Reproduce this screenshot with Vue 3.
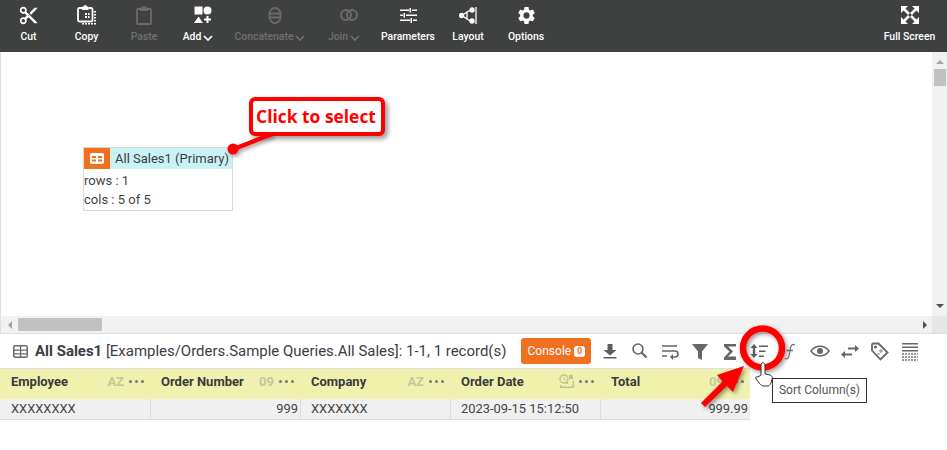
<template>
  <div class="page">
    <div class="toolbar">
      <div
        v-for="item in tools"
        :key="item.label"
        :class="['tool', { off: item.off, caret: item.caret }]"
        :style="{ width: item.width + 'px' }"
      >
        <span class="tool-icon" v-html="item.svg"></span>
        <span class="tool-label">{{ item.label }}<svg v-if="item.caret" class="chev" viewBox="0 0 10 6" width="10" height="6"><path d="M1 1l4 4 4-4" fill="none" stroke="currentColor" stroke-width="1.700"/></svg></span>
      </div>
      <div class="tool full">
        <span class="tool-icon">
          <svg width="18" height="18" viewBox="0 0 18 18" fill="#fff" stroke="none"><path d="M0 0h7L0 7zM18 0v7L11 0zM0 18v-7l7 7zM18 18h-7l7-7z"/><path d="M3 3l5 5M15 3l-5 5M3 15l5-5M15 15l-5-5" stroke="#fff" stroke-width="2.600"/></svg>
        </span>
        <span class="tool-label">Full Screen</span>
      </div>
    </div>

    <div class="pane">
      <div class="canvas">
        <div class="node">
          <div class="node-head">
            <span class="node-badge">
              <svg width="14" height="11" viewBox="0 0 14 11"><rect width="14" height="11" rx="2" fill="#fff"/><path d="M2 3h4v2H2zM8 3h4v2H8zM2 6.500h4v2H2zM8 6.500h4v2H8z" fill="#f07020"/></svg>
            </span>
            <span class="node-title">All Sales1 (Primary)</span>
          </div>
          <div class="node-line">rows : 1</div>
          <div class="node-line">cols : 5 of 5</div>
        </div>
      </div>
      <div class="vscroll">
        <i class="tri up"></i>
        <b class="vthumb"></b>
        <i class="tri down"></i>
      </div>
      <div class="hscroll">
        <i class="tri left"></i>
        <b class="hthumb"></b>
        <i class="tri right"></i>
      </div>
      <div class="corner"></div>
    </div>

    <div class="bar">
      <svg class="bar-grid" width="15" height="13" viewBox="0 0 15 13"><rect x=".75" y=".75" width="13.500" height="11.500" rx="1.500" fill="none" stroke="#6a6a6a" stroke-width="1.500"/><path d="M1 4.500h13v1.300H1zM6.900 1h1.300v11H6.900z" fill="#6a6a6a"/><path d="M1 8.200h13v1.200H1z" fill="#6a6a6a"/></svg>
      <span class="bar-title"><strong>All Sales1</strong> [Examples/Orders.Sample Queries.All Sales]: 1-1, 1 record(s)</span>
      <span class="console">Console<em>0</em></span>
      <div class="bar-icons">
        <svg v-for="(icon, i) in barIcons" :key="i" width="30" height="22" viewBox="0 0 30 22" v-html="icon"></svg>
      </div>
    </div>

    <div class="table">
      <div class="row head">
        <div v-for="col in columns" :key="col.name" class="th">
          <span class="th-name">{{ col.name }}</span>
          <span class="th-type" v-if="col.type">{{ col.type }}</span>
          <svg v-else class="th-date" width="16" height="15" viewBox="0 0 16 15"><circle cx="5" cy="5" r="4" fill="none" stroke="#c2c48c" stroke-width="1.400"/><path d="M5 3v2.500h2" fill="none" stroke="#c2c48c"/><path d="M10 1h4v4h-4zM1 11v3h14V6.500h-1.400v6H2.400V11z" fill="#c2c48c"/><path d="M7 8h2v2H7z" fill="#c2c48c"/></svg>
          <span class="dots"><i></i><i></i><i></i></span>
        </div>
      </div>
      <div class="row body">
        <div class="td">XXXXXXXX</div>
        <div class="td num">999</div>
        <div class="td">XXXXXXX</div>
        <div class="td">2023-09-15 15:12:50</div>
        <div class="td num">999.99</div>
      </div>
    </div>

    <div class="callout">Click to select</div>
    <div class="tooltip">Sort Column(s)</div>

    <svg class="marks" width="947" height="450" viewBox="0 0 947 450">
      <defs>
        <filter id="soft" x="-20%" y="-20%" width="150%" height="150%">
          <feDropShadow dx="2" dy="2" stdDeviation="2" flood-color="#000" flood-opacity=".4"/>
        </filter>
      </defs>
      <g filter="url(#soft)">
        <path d="M272 134L234 149" stroke="#f00" stroke-width="4.500"/>
        <circle cx="233" cy="149" r="5.500" fill="#f00"/>
      </g>
      <g filter="url(#soft)">
        <path d="M744 366L717 375 722.500 381.500 701 403 705 407 727 386 733 392z" fill="#f00"/>
      </g>
      <circle cx="762.500" cy="348" r="19.500" fill="none" stroke="#f00" stroke-width="6.500" filter="url(#soft)"/>
      <path d="M761 375v-10c0-3 4-3 4 0v9l5 1c2 1 3 2 2 4l-1 4c-1 2-2 3-4 3h-3c-2 0-3-1-4-2l-4-5c-1-2 1-3 2-2z" fill="#fff" stroke="#333" stroke-width="1"/>
    </svg>
  </div>
</template>

<script setup>
const tools = [
  {
    label: 'Cut',
    width: 57,
    svg: '<svg width="19" height="19" viewBox="1 1 22 22" fill="#fff"><path d="M9.640 7.640c.23-.5.36-1.050.36-1.640 0-2.210-1.790-4-4-4S2 3.790 2 6s1.790 4 4 4c.59 0 1.140-.13 1.640-.36L10 12l-2.360 2.360C7.140 14.130 6.590 14 6 14c-2.210 0-4 1.790-4 4s1.790 4 4 4 4-1.790 4-4c0-.59-.13-1.140-.36-1.640L12 14l7 7h3v-1L9.640 7.640zM6 8c-1.100 0-2-.89-2-2s.9-2 2-2 2 .89 2 2-.9 2-2 2zm0 12c-1.100 0-2-.89-2-2s.9-2 2-2 2 .89 2 2-.9 2-2 2zm6-7.500c-.28 0-.5-.22-.5-.5s.22-.5.5-.5.5.22.5.5-.22.5-.5.5zM19 3l-6 6 2 2 7-7V3z"/></svg>'
  },
  {
    label: 'Copy',
    width: 59,
    svg: '<svg width="20" height="20" viewBox="0 0 20 20" fill="none"><path d="M5 3H2.500A1.500 1.500 0 0 0 1 4.500V15a1.500 1.500 0 0 0 1.500 1.500H14A1.500 1.500 0 0 0 15.500 15V4.500A1.500 1.500 0 0 0 14 3h-2.500" stroke="#fff" stroke-width="1.800"/><path d="M5 1.500h1.800a1.500 1.500 0 0 1 3 0h1.700V5H5z" fill="#fff"/><path d="M8 8h2v2H8zM11 8h1.500v2H11zM8 11h2v2H8zM11 11h1.500v2H11z" fill="#fff"/><path d="M17 6h2v1.500h-2zM17 9h2v1.500h-2zM17 12h2v1.500h-2zM17 15h2v1.500h-2zM5 18h2v1.500H5zM8 18h2v1.500H8zM11 18h2v1.500h-2zM14 18h2v1.500h-2zM17 18h2v1.500h-2z" fill="#fff"/></svg>'
  },
  {
    label: 'Paste',
    width: 56,
    off: true,
    svg: '<svg width="16" height="19" viewBox="0 0 16 19" fill="none"><path d="M4 3H1.800A.8.8 0 0 0 1 3.800V17.200a.8.8 0 0 0 .8.8h12.400a.8.8 0 0 0 .8-.8V3.800a.8.8 0 0 0-.8-.8H12" stroke="#6a6a6a" stroke-width="1.800"/><path d="M4 1.500h2.500a1.500 1.500 0 0 1 3 0H12V5H4z" fill="#6a6a6a"/></svg>'
  },
  {
    label: 'Add',
    width: 52,
    caret: true,
    svg: '<svg width="18" height="18" viewBox="0 0 18 18" fill="#fff"><rect x=".5" y=".5" width="8" height="8"/><circle cx="13.500" cy="4.500" r="4"/><path d="M4.500 10.500L9 17H0z"/><path d="M12.500 10h2v2.500H17v2h-2.500V17h-2v-2.500H10v-2h2.500z"/></svg>'
  },
  {
    label: 'Concatenate',
    width: 92,
    off: true,
    caret: true,
    svg: '<svg width="14" height="17" viewBox="0 0 14 17" fill="none" stroke="#6a6a6a" stroke-width="1.800"><rect x="1.500" y="1" width="11" height="15" rx="5.500"/><path d="M1.500 6.500h11M1.500 10.500h11"/></svg>'
  },
  {
    label: 'Join',
    width: 56,
    off: true,
    caret: true,
    svg: '<svg width="18" height="12" viewBox="0 0 18 12" fill="none" stroke="#6a6a6a" stroke-width="2"><circle cx="6" cy="6" r="5"/><circle cx="12" cy="6" r="5"/></svg>'
  },
  {
    label: 'Parameters',
    width: 72,
    svg: '<svg width="17" height="15" viewBox="0 0 17 15" fill="#fff"><path d="M0 1.500h9v1.500H0zM12 1.500h5v1.500h-5zM9.500 0H11v4.500H9.500zM0 6.500h3v1.500H0zM6 6.500h11v1.500H6zM3.500 5H5v4.500H3.500zM0 11.500h10v1.500H0zM13 11.500h4v1.500h-4zM10.500 10H12v5h-1.500z"/></svg>'
  },
  {
    label: 'Layout',
    width: 48,
    svg: '<svg width="18" height="19" viewBox="0 0 18 19" fill="none" stroke="#fff" stroke-width="1.300"><path d="M17 1v17"/><path d="M3 9.500l5-3.500 3.500-2M3 9.500l5 3.500 3.500 2M8 6.500v6"/><circle cx="2.500" cy="9.500" r="2" fill="#fff"/><circle cx="13" cy="4" r="2" fill="#fff"/><circle cx="13" cy="15" r="2" fill="#fff"/></svg>'
  },
  {
    label: 'Options',
    width: 68,
    svg: '<svg width="21" height="21" viewBox="0 0 24 24" fill="#fff"><path d="M19.140 12.940c.04-.3.06-.61.06-.94 0-.32-.02-.64-.07-.94l2.030-1.580c.18-.14.23-.41.12-.61l-1.920-3.320c-.12-.22-.37-.29-.59-.22l-2.390.96c-.5-.38-1.030-.7-1.620-.94l-.36-2.540c-.04-.24-.24-.41-.48-.41h-3.840c-.24 0-.43.17-.47.41l-.36 2.540c-.59.24-1.130.57-1.620.94l-2.390-.96c-.22-.08-.47 0-.59.22L2.740 8.870c-.12.21-.08.47.12.61l2.030 1.580c-.05.3-.09.63-.09.94s.02.64.07.94l-2.030 1.580c-.18.14-.23.41-.12.61l1.920 3.320c.12.22.37.29.59.22l2.390-.96c.5.38 1.030.7 1.620.94l.36 2.540c.05.24.24.41.48.41h3.840c.24 0 .44-.17.47-.41l.36-2.540c.59-.24 1.130-.56 1.620-.94l2.390.96c.22.08.47 0 .59-.22l1.920-3.320c.12-.22.07-.47-.12-.61l-2.010-1.580zM12 15.600c-1.980 0-3.600-1.620-3.600-3.600s1.620-3.600 3.600-3.600 3.600 1.620 3.600 3.600-1.620 3.600-3.600 3.600z"/></svg>'
  }
]

const barIcons = [
  '<path d="M12.500 4h5v6h4l-6.500 5.500L8.500 10h4zM8.500 17h13v1.600h-13z" fill="#5e5e5e"/>',
  '<circle cx="13" cy="9" r="5" fill="none" stroke="#666" stroke-width="1.600"/><path d="M16.500 12.500L21.500 17.500" stroke="#666" stroke-width="2.200"/>',
  '<path d="M7 6h15M7 11h13a3 3 0 0 1 0 6h-4M7 16h5" fill="none" stroke="#666" stroke-width="1.600"/><path d="M18 14l-3 3 3 3z" fill="#666"/>',
  '<path d="M7 4h16l-6 7.500V20l-4-2v-6.500z" fill="#666"/>',
  '<path d="M9 4h12v2.600h-8l5 4.900-5 5h8V20H9v-2.600l5.500-5.900L9 6.500z" fill="#666"/>',
  '<path d="M9 4l3.500 4h-2.300v6h2.300L9 18l-3.500-4h2.300V8H5.500zM14 5.500h9v1.600h-9zM14 10.500h6.500v1.600H14zM14 15.500h4.800v1.600H14z" fill="#5e5e5e"/>',
  '<path d="M20 5c-3-1.500-4 .5-4.500 3l-1.500 8c-.5 2.500-2 3.500-4 2.500M11.500 10.500H18" fill="none" stroke="#777" stroke-width="1.300"/>',
  '<path d="M6 11c4.500-6.500 13.500-6.500 18 0-4.500 6.500-13.500 6.500-18 0z" fill="none" stroke="#666" stroke-width="1.500"/><circle cx="15" cy="11" r="3" fill="#666"/>',
  '<path d="M13 7.500h7V5l4 3.500-4 3.500V9.500h-7zM17 13.500h-7V11l-4 3.500 4 3.500v-2.500h7z" fill="#666"/>',
  '<path d="M7 5a1.500 1.500 0 0 1 1.500-1.500h5l9 9-7 7-8.500-9z" fill="none" stroke="#666" stroke-width="1.800"/><circle cx="10.500" cy="7" r="1.500" fill="#666"/><path d="M14 11h4M16 9v4M12 14h3" stroke="#888" stroke-width="1"/>',
  '<path d="M7 3h16v1.500H7zM7 6.500h16V8H7zM7 10h16v1.500H7z" fill="#666"/><path d="M7 14h16M7 17h16M7 20h16" stroke="#777" stroke-width="1.400" stroke-dasharray="2 1"/>'
]

const columns = [
  { name: 'Employee', type: 'AZ' },
  { name: 'Order Number', type: '09' },
  { name: 'Company', type: 'AZ' },
  { name: 'Order Date', type: '' },
  { name: 'Total', type: '09' }
]
</script>

<style>
html,
body {
  margin: 0;
  background: #fff;
}
</style>

<style scoped>
.page {
  position: relative;
  width: 947px;
  height: 450px;
  overflow: hidden;
  background: #fff;
  font-family: Roboto, "Liberation Sans", sans-serif;
  color: #333;
}

.toolbar {
  display: flex;
  height: 52px;
  background: #3f4140;
}

.tool {
  display: flex;
  flex-direction: column;
  align-items: center;
  color: #fff;
}

.tool.off {
  color: #6f6f6f;
}

.tool-icon {
  display: flex;
  align-items: center;
  justify-content: center;
  height: 20px;
  margin-top: 5px;
}

.tool.caret .tool-icon {
  margin-left: 10px;
}

.tool-label {
  display: flex;
  align-items: center;
  gap: 2px;
  margin-top: 5px;
  font-size: 10.4px;
  font-weight: 500;
  line-height: 14px;
  white-space: nowrap;
}

.chev {
  margin-top: 1px;
}

.tool.full {
  margin-left: auto;
  width: 75px;
}

.pane {
  display: grid;
  grid-template-columns: 931px 15px;
  grid-template-rows: 264px 17px;
  height: 281px;
  border-left: 1px solid #e0e0e0;
}

.canvas {
  position: relative;
  overflow: hidden;
}

.node {
  position: absolute;
  left: 82px;
  top: 95px;
  width: 148px;
  height: 62px;
  border: 1px solid #d8d8d8;
  font-size: 13px;
  color: #444;
}

.node-head {
  display: flex;
  align-items: center;
  height: 21px;
  background: #c9f3f3;
}

.node-badge {
  display: flex;
  align-items: center;
  justify-content: center;
  width: 26px;
  height: 21px;
  background: #f07020;
}

.node-title {
  margin: -1px 0 0 5px;
  font-size: 13px;
  color: #3a3a4a;
  white-space: nowrap;
}

.node-line {
  height: 19px;
  line-height: 23px;
}

.vscroll,
.hscroll {
  position: relative;
  background: #f1f1f1;
}

.vthumb {
  position: absolute;
  left: 2px;
  top: 17px;
  width: 12px;
  height: 17px;
  background: #c1c1c1;
}

.hthumb {
  position: absolute;
  left: 17px;
  top: 2px;
  width: 84px;
  height: 13px;
  background: #c1c1c1;
}

.corner {
  background: #e6e6e6;
}

.tri {
  position: absolute;
  width: 0;
  height: 0;
  border: 4px solid transparent;
}

.tri.up {
  left: 4px;
  top: 4px;
  border-bottom: 4px solid #a3a3a3;
}

.tri.down {
  left: 4px;
  bottom: 4px;
  border-top: 4px solid #505050;
}

.tri.left {
  left: 3px;
  top: 5px;
  border-right: 4px solid #a3a3a3;
}

.tri.right {
  right: 1px;
  top: 5px;
  border-left: 4px solid #505050;
}

.bar {
  display: flex;
  align-items: center;
  height: 34px;
  padding-left: 13px;
  border-top: 1px solid #e0e0e0;
}

.bar-grid {
  flex: none;
}

.bar-title {
  margin-left: 7px;
  font-size: 14.96px;
  color: #3c3c46;
  white-space: nowrap;
}

.bar-title strong {
  font-weight: 700;
}

.console {
  display: flex;
  align-items: center;
  justify-content: center;
  gap: 3px;
  box-sizing: border-box;
  width: 70px;
  height: 26px;
  margin-left: 15px;
  border-radius: 3px;
  background: #f07020;
  color: #fff;
  font-size: 12px;
}

.console em {
  width: 11px;
  border-radius: 3px;
  background: #fff;
  color: #f07020;
  font-size: 9px;
  font-style: normal;
  font-weight: 700;
  line-height: 11px;
  text-align: center;
}

.bar-icons {
  display: flex;
  margin-left: 4px;
}

.table {
  width: 750px;
  border-top: 1px solid #e0e0e0;
}

.row {
  display: grid;
  grid-template-columns: repeat(5, 150px);
}

.head {
  height: 30px;
  background: #f0f1ae;
}

.th {
  display: flex;
  align-items: center;
  padding: 0 5px 5px 11px;
  font-size: 13px;
  font-weight: 700;
  color: #3a3a3a;
}

.th-name {
  flex: 1;
}

.th-type {
  margin-right: 5px;
  font-size: 13px;
  color: #c5c79a;
}

.th-date {
  margin-right: 4px;
}

.dots {
  display: flex;
  gap: 3px;
  width: 15px;
  margin-right: 1px;
}

.dots i {
  width: 3px;
  height: 3px;
  border-radius: 50%;
  background: #777;
}

.body {
  height: 20px;
  background: #f0f0f0;
  border-bottom: 1px solid #dcdcdc;
}

.td {
  box-sizing: border-box;
  padding: 0 2px 0 10px;
  border-left: 1px solid #dcdcdc;
  font-size: 12.9px;
  line-height: 20px;
  color: #444;
  white-space: nowrap;
}

.td:first-child {
  padding-left: 11px;
  border-left: 0;
}

.td.num {
  text-align: right;
}

.callout {
  position: absolute;
  left: 249px;
  top: 97px;
  box-sizing: border-box;
  width: 136px;
  height: 39px;
  padding-right: 2px;
  border: 4px solid #f00;
  border-radius: 6px;
  background: #fff;
  box-shadow: 3px 3px 5px rgba(0, 0, 0, 0.4);
  color: #f00;
  font-family: "Open Sans", sans-serif;
  font-size: 17.4px;
  font-weight: 700;
  line-height: 30px;
  text-align: center;
  white-space: nowrap;
}

.tooltip {
  position: absolute;
  left: 772px;
  top: 378px;
  box-sizing: border-box;
  width: 95px;
  height: 25px;
  border: 1px solid #333;
  background: #fff;
  color: #555;
  font-size: 12px;
  line-height: 23px;
  text-align: center;
  white-space: nowrap;
}

.marks {
  position: absolute;
  left: 0;
  top: 0;
  pointer-events: none;
}
</style>
